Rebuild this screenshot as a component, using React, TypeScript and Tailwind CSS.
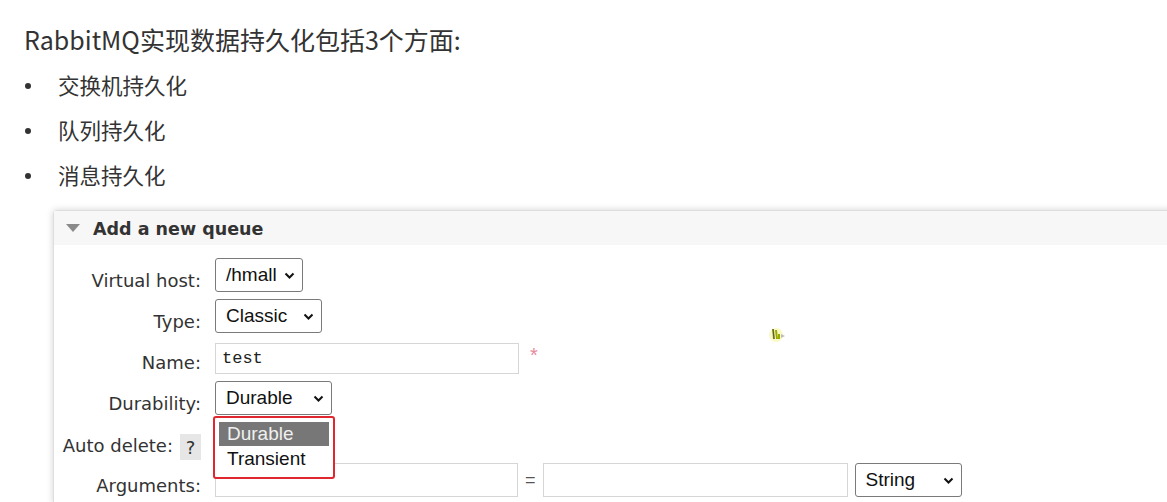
import React from 'react';

const cjk = { fontFamily: '"Noto Sans CJK SC", "Noto Sans", sans-serif' };
const verdana = { fontFamily: '"DejaVu Sans", Verdana, sans-serif' };
const arial = { fontFamily: '"Liberation Sans", Arial, sans-serif' };
const mono = { fontFamily: '"Liberation Mono", "Courier New", monospace' };

function Chevron() {
  return (
    <svg width="11" height="7" viewBox="0 0 11 7" className="shrink-0">
      <path d="M1.5 1.5 L5.5 5.5 L9.5 1.5" fill="none" stroke="#111" strokeWidth="2" />
    </svg>
  );
}

function Select({ value, width }: { value: string; width: string }) {
  return (
    <div
      className={`${width} h-[34px] border border-[#7a7a7a] rounded-[3px] bg-white flex items-center justify-between pl-[10px] pr-[7px] text-[19px] text-[#111]`}
      style={arial}
    >
      <span>{value}</span>
      <Chevron />
    </div>
  );
}

function Row({
  label,
  children,
  extra,
}: {
  label: React.ReactNode;
  children: React.ReactNode;
  extra?: React.ReactNode;
}) {
  return (
    <div className="relative h-[41px] flex items-start">
      <div
        className="w-[147px] shrink-0 h-[34px] mt-[6px] flex items-end justify-end pb-[2px] text-[18px] text-[#333]"
        style={verdana}
      >
        {label}
      </div>
      <div className="ml-[14px] mt-[2px] flex items-start gap-[7px]">{children}</div>
      {extra}
    </div>
  );
}

export default function App() {
  const bullets = ['交换机持久化', '队列持久化', '消息持久化'];
  return (
    <div className="w-full h-[502px] bg-white overflow-hidden relative">
      <div className="pt-[19px] pl-[24px]">
        <h1 className="text-[25px] leading-[40px] text-[#333] font-normal" style={cjk}>
          RabbitMQ实现数据持久化包括3个方面:
        </h1>
        <ul className="mt-[4px]">
          {bullets.map((b) => (
            <li key={b} className="h-[45px] flex items-center text-[21.5px] text-[#333]" style={cjk}>
              <span className="w-[34px] flex items-center">
                <span className="ml-[1px] w-[6px] h-[6px] rounded-full bg-[#333]" />
              </span>
              <span>{b}</span>
            </li>
          ))}
        </ul>
      </div>

      <div className="ml-[53px] mt-[12px] w-[1200px] bg-white border border-[#dedede] rounded-tl-[4px] shadow-[0_0_7px_rgba(0,0,0,0.18)]">
        <div className="h-[34px] bg-[#f7f7f7] flex items-center pl-[12px] gap-[13px]">
          <svg width="14" height="9" viewBox="0 0 14 9">
            <path d="M0 0 L14 0 L7 8 Z" fill="#8a8a8a" />
          </svg>
          <span className="text-[17.5px] font-bold text-[#333] mt-[3px]" style={verdana}>
            Add a new queue
          </span>
        </div>

        <div className="pt-[11px]">
          <Row label="Virtual host:">
            <Select value="/hmall" width="w-[88px]" />
          </Row>
          <Row label="Type:">
            <Select value="Classic" width="w-[107px]" />
          </Row>
          <Row label="Name:">
            <div className="mt-[3px] w-[304px] h-[31px] border border-[#d6d6d6] bg-white flex items-center pl-[6px] text-[17px] text-[#222]" style={mono}>
              test
            </div>
            <span className="text-[20px] leading-[20px] text-[#e68a9c] mt-[5px] ml-[4px]" style={arial}>
              *
            </span>
          </Row>
          <Row
            label="Durability:"
            extra={
              <div className="absolute left-[159px] top-[37px] w-[122px] h-[63px] border-2 border-[#e0262f] rounded-[3px] bg-white p-[4px] z-10">
                <div className="h-[24px] bg-[#777] text-[#f0f0f0] text-[19px] leading-[24px] pl-[8px]" style={arial}>
                  Durable
                </div>
                <div className="h-[25px] text-[#111] text-[19px] leading-[25px] pl-[8px]" style={arial}>
                  Transient
                </div>
              </div>
            }
          >
            <Select value="Durable" width="w-[117px]" />
          </Row>
          <Row
            label={
              <span className="flex items-center gap-[7px]">
                <span className="mb-[-1px]">Auto delete:</span>
                <span className="w-[21px] h-[26px] bg-[#e6e6e6] flex items-center justify-center text-[18px] text-[#333] mb-[-4px]">
                  ?
                </span>
              </span>
            }
          >
            <div />
          </Row>
          <Row label="Arguments:">
            <div className="w-[303px] h-[34px] border border-[#d6d6d6] bg-white" />
            <span className="text-[18px] text-[#555] leading-[34px]" style={arial}>
              =
            </span>
            <div className="w-[305px] h-[34px] border border-[#d6d6d6] bg-white" />
            <Select value="String" width="w-[107px]" />
          </Row>
        </div>
      </div>

      <svg className="absolute left-[768px] top-[324px]" width="20" height="20" viewBox="0 0 20 20">
        <circle cx="8" cy="11" r="7" fill="#f6f7b0" opacity="0.7" />
        <path d="M5 5 L6 15 M8 6 L9 15 M11 10 L11 15" stroke="#9aa800" strokeWidth="2" />
        <path d="M5 5 L6 15" stroke="#555" strokeWidth="1" />
        <path d="M13 10 L17 12 L13 14 Z" fill="#bbb" />
      </svg>
    </div>
  );
}
